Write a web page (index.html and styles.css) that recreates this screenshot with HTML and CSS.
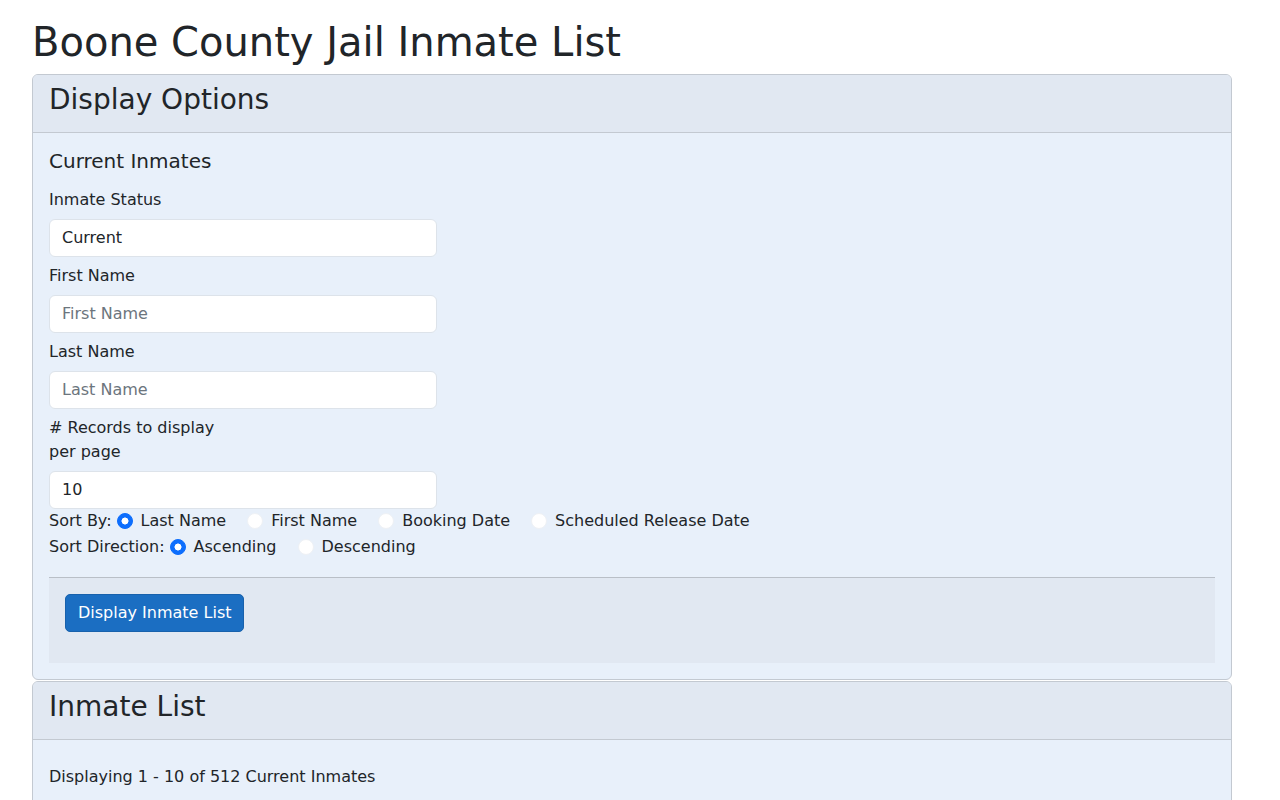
FILE: index.html
```html
<!DOCTYPE html>
<html lang="en">
<head>
<meta charset="utf-8">
<title>Boone County Jail Inmate List</title>
<link rel="stylesheet" href="styles.css">
</head>
<body>
<main class="page">
  <h1 class="title">Boone County Jail Inmate List</h1>

  <section class="card">
    <header class="card-header"><h3 class="card-title">Display Options</h3></header>
    <div class="card-body">
      <h5 class="section-title">Current Inmates</h5>
      <div class="fields">
        <label class="field-label" for="status">Inmate Status</label>
        <input class="field-input" id="status" type="text" value="Current" readonly>

        <label class="field-label" for="first">First Name</label>
        <input class="field-input" id="first" type="text" placeholder="First Name">

        <label class="field-label" for="last">Last Name</label>
        <input class="field-input" id="last" type="text" placeholder="Last Name">

        <label class="field-label narrow" for="count"># Records to display per page</label>
        <input class="field-input" id="count" type="text" value="10">
      </div>

      <div class="radio-row">
        <span class="radio-caption">Sort By:</span>
        <label class="radio-opt"><input type="radio" name="sort" checked><span>Last Name</span></label>
        <label class="radio-opt"><input type="radio" name="sort"><span>First Name</span></label>
        <label class="radio-opt"><input type="radio" name="sort"><span>Booking Date</span></label>
        <label class="radio-opt"><input type="radio" name="sort"><span>Scheduled Release Date</span></label>
      </div>
      <div class="radio-row">
        <span class="radio-caption">Sort Direction:</span>
        <label class="radio-opt"><input type="radio" name="dir" checked><span>Ascending</span></label>
        <label class="radio-opt"><input type="radio" name="dir"><span>Descending</span></label>
      </div>

      <div class="form-footer">
        <button class="btn-primary" type="button">Display Inmate List</button>
      </div>
    </div>
  </section>

  <section class="card second">
    <header class="card-header"><h3 class="card-title">Inmate List</h3></header>
    <div class="card-body">
      <p class="summary">Displaying 1 - 10 of 512 Current Inmates</p>
    </div>
  </section>
</main>
</body>
</html>
```

FILE: styles.css
```css
* { box-sizing: border-box; }

html, body {
  margin: 0;
  padding: 0;
  background: #ffffff;
}

body {
  font-family: "DejaVu Sans", "Liberation Sans", sans-serif;
  font-size: 16px;
  line-height: 1.5;
  color: #212529;
}

.page {
  padding: 18px 48px 0 32px;
}

.title {
  margin: 0 0 8px;
  font-size: 40px;
  font-weight: 400;
  line-height: 1.2;
}

.card {
  border: 1px solid #c3c9d1;
  border-radius: 6px;
  background: #e8f0fa;
  overflow: hidden;
}

.card.second {
  margin-top: 1px;
}

.card-header {
  background: #e1e8f2;
  padding: 8px 16px;
  border-bottom: 1px solid #c3c9d1;
}

.card-title {
  margin: 0 0 8px;
  font-size: 28px;
  font-weight: 400;
  line-height: 33px;
}

.card-body {
  padding: 16px;
}

.section-title {
  margin: 0 0 15px;
  font-size: 20px;
  font-weight: 400;
  line-height: 24px;
}

.fields {
  display: flex;
  flex-direction: column;
  width: 388px;
}

.field-label {
  display: block;
  margin-bottom: 7px;
}

.field-label.narrow {
  width: 194px;
}

.field-input {
  display: block;
  width: 100%;
  height: 38px;
  padding: 5px 12px 7px;
  font: inherit;
  color: #212529;
  background: #ffffff;
  border: 1px solid #dde3ea;
  border-radius: 6px;
  margin-bottom: 7px;
  outline: none;
}

.fields .field-input:last-child {
  margin-bottom: 0;
}

.field-input::placeholder {
  color: #6c757d;
}

.radio-row {
  display: flex;
  align-items: center;
  height: 24px;
  margin-bottom: 2px;
}

.radio-caption {
  margin-right: 5px;
}

.radio-opt {
  display: inline-flex;
  align-items: center;
  margin-right: 21px;
}

.radio-opt input {
  appearance: none;
  -webkit-appearance: none;
  width: 16px;
  height: 16px;
  margin: 0 8px 0 0;
  border-radius: 50%;
  background: #ffffff;
  border: 1px solid #eef1f5;
}

.radio-opt input:checked {
  background: #0d6efd;
  border-color: #0d6efd;
  background-image: radial-gradient(circle, #ffffff 0, #ffffff 3.2px, transparent 3.8px);
}

.form-footer {
  margin-top: 18px;
  background: #e1e8f2;
  border-top: 1px solid #b9bfc7;
  padding: 16px 16px 31px;
}

.btn-primary {
  display: inline-block;
  height: 38px;
  padding: 6px 12px;
  font: inherit;
  color: #ffffff;
  background: #1b6ec2;
  border: 1px solid #1861ac;
  border-radius: 5px;
}

.summary {
  margin: 9px 0 0;
}
```
